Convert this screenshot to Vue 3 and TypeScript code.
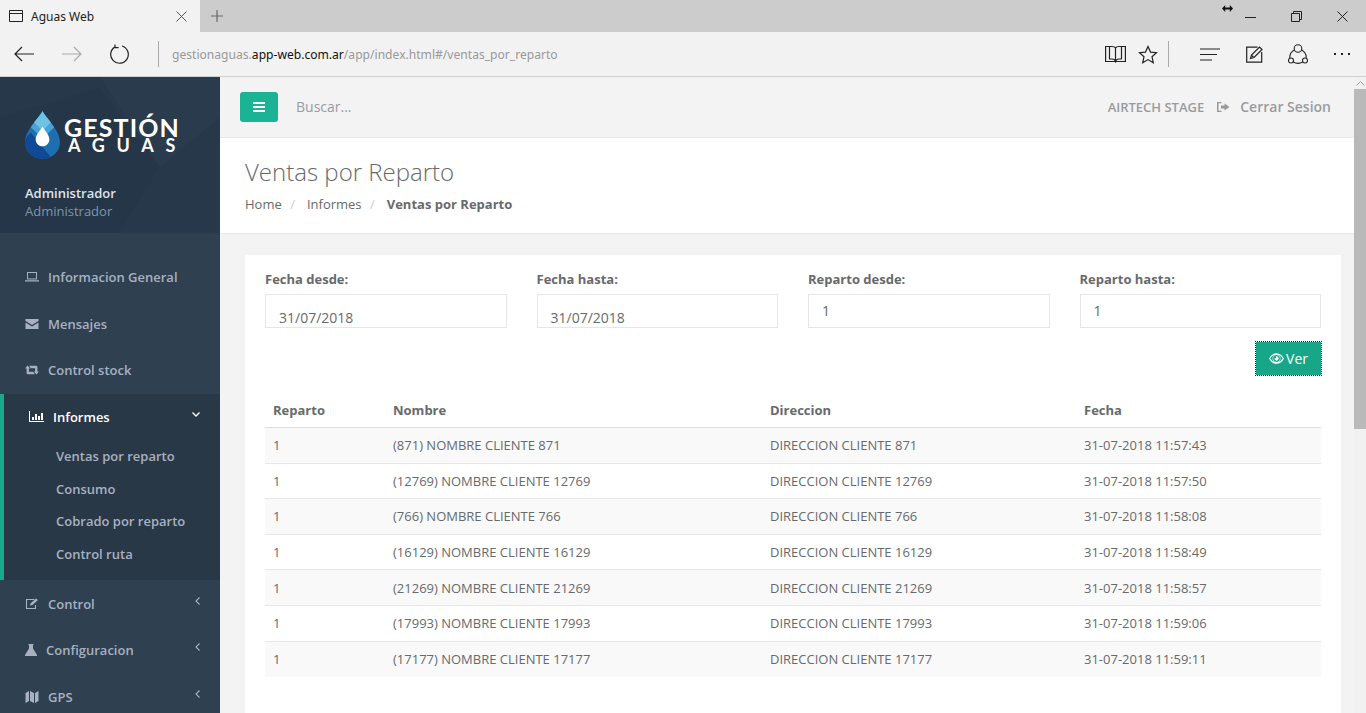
<script setup lang="ts">
interface Venta {
  id: number;
  hora: string;
}

const ventas: Venta[] = [
  { id: 871, hora: "11:57:43" },
  { id: 12769, hora: "11:57:50" },
  { id: 766, hora: "11:58:08" },
  { id: 16129, hora: "11:58:49" },
  { id: 21269, hora: "11:58:57" },
  { id: 17993, hora: "11:59:06" },
  { id: 17177, hora: "11:59:11" },
];

const subItems = ["Ventas por reparto", "Consumo", "Cobrado por reparto", "Control ruta"];
</script>

<template>
  <div class="window">
    <div class="tabstrip">
      <div class="tab">
        <svg class="tab-icon" width="14" height="12" viewBox="0 0 14 12" fill="none" stroke="#222">
          <path d="M.5.5h13v11H.5zM.5 3.5h13" />
        </svg>
        <span class="tab-title">Aguas Web</span>
        <svg width="11" height="11" viewBox="0 0 11 11" stroke="#555" fill="none"><path d="M.5.5l10 10M10.5.5l-10 10" /></svg>
      </div>
      <svg class="plus" width="12" height="12" viewBox="0 0 12 12" stroke="#666" stroke-width="1.2"><path d="M6 0v12M0 6h12" /></svg>
      <div class="win-controls">
        <svg width="11" height="11" viewBox="0 0 11 11" stroke="#222" fill="none"><path d="M0 6.5h11" /></svg>
        <svg width="11" height="11" viewBox="0 0 11 11" stroke="#222" fill="none"><path d="M.5 2.5h8v8h-8zM2.5 2.5v-2h8v8h-2" /></svg>
        <svg width="11" height="11" viewBox="0 0 11 11" stroke="#222" fill="none"><path d="M.5.5l10 10M10.5.5l-10 10" /></svg>
      </div>
      <svg class="cursor" width="11" height="7" viewBox="0 0 11 7" fill="#111"><path d="M0 3.500L3.200 0v2.500h4.600V0L11 3.500 7.800 7V4.500H3.200V7z" /></svg>
    </div>

    <div class="addressbar">
      <div class="nav-buttons">
        <svg width="20" height="16" viewBox="0 0 20 16" fill="none" stroke="#222" stroke-width="1.2"><path d="M20 8H1M8 1L1 8l7 7" /></svg>
        <svg width="20" height="16" viewBox="0 0 20 16" fill="none" stroke="#aaa" stroke-width="1.2"><path d="M0 8h19M12 1l7 7-7 7" /></svg>
        <svg width="20" height="20" viewBox="0 0 20 20" fill="none" stroke="#222" stroke-width="1.2"><path d="M5.5 2.6a8.8 8.8 0 1 0 6.5-.6M5 .5v3.2h3.6" /></svg>
      </div>
      <div class="divider"></div>
      <div class="url">gestionaguas.<b>app-web.com.ar</b>/app/index.html#/ventas_por_reparto</div>
      <div class="tools">
        <svg class="t-book" width="21" height="18" viewBox="0 0 21 18" fill="none" stroke="#222" stroke-width="1.2"><path d="M.6 1.500h6.400c1.800 0 3 .6 3.500 1.500.5-.9 1.700-1.500 3.500-1.500h6.400v15H.6zM4.500 1.500v12.500h2.500c1.800 0 3 .7 3.500 2.500.5-1.800 1.700-2.500 3.500-2.500h2.500V1.500M10.500 3v13.500" /></svg>
        <svg class="t-star" width="20" height="19" viewBox="0 0 20 19" fill="none" stroke="#222" stroke-width="1.200"><path d="M10 1.500l2.500 5.600 6 .6-4.500 4 1.300 6L10 14.600l-5.300 3.100 1.300-6-4.500-4 6-.6z" /></svg>
        <div class="divider tool-div"></div>
        <svg class="t-hub" width="20" height="13" viewBox="0 0 20 13" stroke="#222" stroke-width="1.100"><path d="M0 1h20M0 6.500h17M0 12h12" /></svg>
        <svg class="t-note" width="17" height="17" viewBox="0 0 17 17" fill="none" stroke="#222" stroke-width="1.200"><path d="M11.500 1.200H.7v15h15V6" /><path d="M4.500 12.500l1-3.500L13.500 1l2.500 2.500-8 8z" /><path d="M5.500 11.500l1-2.500 1.500 1.500z" fill="#222" stroke="none" /></svg>
        <svg class="t-share" width="20" height="21" viewBox="0 0 20 21" fill="none" stroke="#222" stroke-width="1.100"><circle cx="10" cy="4.500" r="3.800" /><circle cx="3" cy="16.500" r="2.500" /><circle cx="17" cy="16.500" r="2.500" /><path d="M6.400 6C3.400 7.500 1.600 10.500 1.800 14M13.600 6c3 1.500 4.800 4.500 4.600 8M5.200 18c2.800 1.600 6.800 1.600 9.600 0" /></svg>
        <div class="dots"><i></i><i></i><i></i></div>
      </div>
    </div>

    <div class="page">
      <aside class="sidebar">
        <div class="profile">
          <svg class="polys" width="220" height="156" viewBox="0 0 220 156">
            <path d="M100 0l60 90 60-50V0z" fill="#fff" opacity=".015" />
            <path d="M0 40l100-30 60 80-40 66H0z" fill="#000" opacity=".02" />
          </svg>
          <div class="logo">
            <svg class="drop" width="35" height="48" viewBox="0 0 36 49">
              <path d="M18 0C14 7 0 20 0 32c0 9.500 8 17 18 17s18-7.500 18-17C36 20 22 7 18 0z" fill="#1f6fb0" />
              <path d="M18 0c-2.500 4.500-8 10.500-12 16.500L18 28l12-11.500C26 10.500 20.500 4.500 18 0z" fill="#4aa3d4" />
              <path d="M18 0c-2 3.500-5.500 7.500-8.500 11.500L18 20l8.500-8.500C23.500 7.500 20 3.500 18 0z" fill="#6fc3e2" />
              <path d="M0 32c0 9.500 8 17 18 17 3 0 6-.7 8.500-2L6 22c-3 3-6 6-6 10z" fill="#0f4a97" />
              <path d="M18 16c-2 3.500-7 8-7 13 0 4 3 7 7 7s7-3 7-7c0-5-5-9.500-7-13z" fill="#fff" />
            </svg>
            <div class="logo-text">
              <div class="logo-top">GESTIÓN</div>
              <div class="logo-bottom">AGUAS</div>
            </div>
          </div>
          <div class="user-name">Administrador</div>
          <div class="user-role">Administrador</div>
        </div>

        <nav class="menu">
          <a class="item">
            <svg width="14" height="10" viewBox="0 0 14 10" fill="#a7b1c2"><path d="M2 0h10v7.500H2zM3 1v5.500h8V1zM0 8.200h14V9.500H0z" fill-rule="evenodd" /></svg>
            <span>Informacion General</span>
          </a>
          <a class="item">
            <svg width="14" height="10" viewBox="0 0 13 10" fill="#a7b1c2"><path d="M0 0h13v2L6.500 6 0 2zM0 3.500l6.500 4 6.500-4V10H0z" /></svg>
            <span>Mensajes</span>
          </a>
          <a class="item">
            <svg width="14" height="10" viewBox="0 0 14 10" fill="#a7b1c2"><path d="M0 3.400L2.600.5l2.600 2.900H3.900v3.400h4.300l1.600 2.400H2.900a1.300 1.300 0 0 1-1.300-1.300V3.400zM14 6.600l-2.600 2.900-2.600-2.900h1.300V3.200H5.800L4.200.8h6.900a1.300 1.300 0 0 1 1.300 1.300v4.500z" /></svg>
            <span>Control stock</span>
          </a>

          <div class="active-group">
            <a class="item active-item">
              <svg width="15" height="11" viewBox="0 0 15 11" fill="#fff"><path d="M0 0h1v10h14v1H0zM3 6h2v3H3zM6 3h2v6H6zM9 5h2v4H9zM12 2h2v7h-2z" /></svg>
              <span class="active-label">Informes</span>
              <svg class="chev" width="8" height="5" viewBox="0 0 8 5" fill="none" stroke="#fff" stroke-width="1.300"><path d="M.5.500L4 4 7.500.500" /></svg>
            </a>
            <a v-for="sub in subItems" :key="sub" class="sub-item">{{ sub }}</a>
          </div>

          <a class="item">
            <svg width="14" height="11" viewBox="0 0 13 11" fill="none" stroke="#a7b1c2" stroke-width="1.100"><path d="M9 1.500H1v9h9V7" /><path d="M4.500 7.500l.5-2L10.500.500 12.500 2l-5.500 5z" fill="#a7b1c2" stroke="none" /></svg>
            <span>Control</span>
            <svg class="chev-left" width="5" height="8" viewBox="0 0 5 8" fill="none" stroke="#a7b1c2" stroke-width="1.100"><path d="M4.500.500L1 4l3.500 3.500" /></svg>
          </a>
          <a class="item">
            <svg width="12" height="12" viewBox="0 0 12 12" fill="#a7b1c2"><path d="M3.500 0h5v1H8v3.500L12 11v1H0v-1l4-6.500V1h-.5z" /></svg>
            <span>Configuracion</span>
            <svg class="chev-left" width="5" height="8" viewBox="0 0 5 8" fill="none" stroke="#a7b1c2" stroke-width="1.100"><path d="M4.500.500L1 4l3.500 3.500" /></svg>
          </a>
          <a class="item">
            <svg width="14" height="12" viewBox="0 0 13 12" fill="#a7b1c2"><path d="M0 2l3.500-2v10L0 12zM4.500 0l4 2v10l-4-2zM9.500 2L13 0v10l-3.500 2z" /></svg>
            <span>GPS</span>
            <svg class="chev-left" width="5" height="8" viewBox="0 0 5 8" fill="none" stroke="#a7b1c2" stroke-width="1.100"><path d="M4.500.500L1 4l3.500 3.500" /></svg>
          </a>
        </nav>
      </aside>

      <main class="content">
        <header class="topbar">
          <button class="menu-btn" type="button">
            <svg width="12" height="10" viewBox="0 0 12 10" fill="#fff"><path d="M0 0h12v2H0zM0 4h12v2H0zM0 8h12v2H0z" /></svg>
          </button>
          <span class="search">Buscar...</span>
          <span class="account">AIRTECH STAGE</span>
          <svg class="logout-icon" width="13" height="10" viewBox="0 0 13 10" fill="#999"><path d="M4.500 0v1.200H1.500v7.600h3V10H0V0zM7.500 1.500L12.500 5l-5 3.500V6.500H4v-3h3.500z" /></svg>
          <span class="logout">Cerrar Sesion</span>
        </header>

        <section class="heading">
          <h2>Ventas por Reparto</h2>
          <ol class="crumbs">
            <li>Home</li>
            <li class="sep">/</li>
            <li>Informes</li>
            <li class="sep">/</li>
            <li class="current">Ventas por Reparto</li>
          </ol>
        </section>

        <section class="wrapper">
          <div class="card">
            <div class="filters">
              <label>
                Fecha desde:
                <input class="date" type="text" value="31/07/2018" />
              </label>
              <label>
                Fecha hasta:
                <input class="date" type="text" value="31/07/2018" />
              </label>
              <label>
                Reparto desde:
                <input type="text" value="1" />
              </label>
              <label>
                Reparto hasta:
                <input type="text" value="1" />
              </label>
            </div>
            <div class="actions">
              <button class="ver" type="button">
                <svg width="15" height="11" viewBox="0 0 14 10" fill="#fff"><path fill-rule="evenodd" d="M7 0c3 0 5.500 2 7 5-1.500 3-4 5-7 5S1.500 8 0 5c1.500-3 4-5 7-5zM7 1.800a3.200 3.200 0 1 0 0 6.400 3.200 3.200 0 0 0 0-6.400zM1.300 5C2.200 6.500 3.300 7.600 4.600 8.200A4.500 4.500 0 0 1 4.600 1.800C3.300 2.400 2.200 3.500 1.300 5zM9.400 1.800a4.500 4.500 0 0 1 0 6.400c1.300-.6 2.400-1.700 3.300-3.200-.9-1.500-2-2.600-3.300-3.200z" /><path d="M7 3a2 2 0 1 1-2 2c.8.300 1.800-.8 1.500-1.900L7 3z" /></svg>
                Ver
              </button>
            </div>
            <table class="grid">
              <colgroup>
                <col style="width: 120px" />
                <col style="width: 377px" />
                <col style="width: 314px" />
                <col />
              </colgroup>
              <thead>
                <tr>
                  <th>Reparto</th>
                  <th>Nombre</th>
                  <th>Direccion</th>
                  <th>Fecha</th>
                </tr>
              </thead>
              <tbody>
                <tr v-for="v in ventas" :key="v.id">
                  <td>1</td>
                  <td>({{ v.id }}) NOMBRE CLIENTE {{ v.id }}</td>
                  <td>DIRECCION CLIENTE {{ v.id }}</td>
                  <td>31-07-2018 {{ v.hora }}</td>
                </tr>
              </tbody>
            </table>
          </div>
        </section>
      </main>

      <div class="scrollbar">
        <div class="sb-arrow">
          <svg width="9" height="5" viewBox="0 0 9 5" fill="none" stroke="#a0a0a0"><path d="M.5 4.500l4-4 4 4" /></svg>
        </div>
        <div class="sb-thumb"></div>
      </div>
    </div>
  </div>
</template>

<style>
html,
body {
  margin: 0;
  overflow: hidden;
}
</style>

<style scoped>
.window {
  width: 1366px;
  height: 713px;
  overflow: hidden;
  display: flex;
  flex-direction: column;
  font-family: "Open Sans", "Noto Sans", sans-serif;
  font-size: 13px;
  color: #676a6c;
  background: #f3f3f4;
}

.tabstrip {
  position: relative;
  height: 32px;
  flex: none;
  display: flex;
  align-items: center;
  background: #cccccc;
}

.tab {
  width: 200px;
  height: 32px;
  box-sizing: border-box;
  padding: 0 13px 0 9px;
  display: flex;
  align-items: center;
  background: #f2f2f2;
}

.tab-title {
  flex: 1;
  margin-left: 8px;
  font-family: "Noto Sans", sans-serif;
  font-size: 12px;
  color: #222;
}

.plus {
  margin-left: 11px;
}

.win-controls {
  margin-left: auto;
  display: flex;
  gap: 35px;
  padding-right: 18px;
}

.cursor {
  position: absolute;
  left: 1222px;
  top: 5px;
}

.addressbar {
  height: 44px;
  flex: none;
  display: flex;
  align-items: center;
  background: #f2f2f2;
  border-bottom: 1px solid #cfcfcf;
}

.nav-buttons {
  display: flex;
  align-items: center;
  gap: 28px;
  margin-left: 14px;
}

.divider {
  width: 1px;
  height: 26px;
  background: #aaa;
  margin-left: 28px;
}

.url {
  margin-left: 13px;
  font-family: "Noto Sans", sans-serif;
  font-size: 12.1px;
  color: #999;
}

.url b {
  font-weight: 400;
  color: #111;
}

.tools {
  margin-left: auto;
  display: flex;
  align-items: center;
  padding-right: 16px;
}

.t-star {
  margin-left: 12px;
}

.tool-div {
  margin-left: 10px;
}

.t-hub {
  margin-left: 31px;
}

.t-note {
  margin-left: 26px;
}

.t-share {
  margin-left: 25px;
}

.dots {
  display: flex;
  gap: 5px;
  margin-left: 26px;
}

.dots i {
  width: 2px;
  height: 2px;
  background: #222;
}

.page {
  flex: 1;
  min-height: 0;
  display: flex;
}

.sidebar {
  width: 220px;
  flex: none;
  background: #2f4050;
  color: #a7b1c2;
  font-weight: 600;
}

.profile {
  position: relative;
  height: 156px;
  box-sizing: border-box;
  padding: 33px 25px 0;
  background: #26384a;
  overflow: hidden;
}

.polys {
  position: absolute;
  left: 0;
  top: 0;
}

.logo {
  position: relative;
  display: flex;
  align-items: center;
  gap: 4px;
  height: 49px;
  margin-bottom: 25px;
}

.drop {
  flex: none;
}

.logo-text {
  color: #fff;
  font-family: Lato, sans-serif;
  font-weight: 700;
}

.logo-top {
  font-size: 25px;
  letter-spacing: 1.100px;
  height: 21px;
  line-height: 25px;
}

.logo-bottom {
  font-size: 18px;
  letter-spacing: 11.700px;
  height: 18px;
  line-height: 18px;
  margin-left: 4px;
  white-space: nowrap;
}

.user-name {
  position: relative;
  color: #dfe4ed;
  line-height: 18px;
}

.user-role {
  position: relative;
  color: #8095a8;
  font-weight: 400;
  line-height: 18px;
  margin-top: 0;
}

.menu {
  padding-top: 21px;
}

.item {
  height: 46.5px;
  box-sizing: border-box;
  display: flex;
  align-items: center;
  gap: 9px;
  padding: 0 19px 0 25px;
}

.active-group {
  height: 186.5px;
  margin-bottom: 0.5px;
  box-sizing: border-box;
  background: #293846;
  border-left: 4px solid #19aa8d;
}

.active-item {
  padding-left: 25px;
  color: #fff;
  gap: 9px;
}

.active-label {
  flex: 1;
}

.chev {
  margin-bottom: 5px;
  margin-right: 1px;
}

.chev-left {
  margin-left: auto;
  margin-bottom: 6px;
  margin-right: 1px;
}

.sub-item {
  display: block;
  height: 32.700px;
  line-height: 32.700px;
  padding-left: 52px;
}

.active-group .sub-item:first-of-type {
  margin-top: -3px;
}

.content {
  flex: 1;
  min-width: 0;
  display: flex;
  flex-direction: column;
}

.topbar {
  height: 61px;
  box-sizing: border-box;
  flex: none;
  display: flex;
  align-items: center;
  padding: 0 23px 1px 20px;
  background: #f3f3f4;
  border-bottom: 1px solid #e7eaec;
  color: #999c9e;
}

.menu-btn {
  width: 38px;
  height: 30px;
  padding: 0;
  border: 0;
  border-radius: 3px;
  background: #1ab394;
  display: flex;
  align-items: center;
  justify-content: center;
}

.search {
  margin-left: 18px;
  font-size: 14px;
  flex: 1;
}

.account {
  font-size: 13px;
  font-weight: 600;
}

.logout-icon {
  margin-left: 13px;
}

.logout {
  margin-left: 10px;
  font-size: 14px;
  font-weight: 600;
}

.heading {
  height: 96px;
  box-sizing: border-box;
  flex: none;
  padding: 0 25px;
  background: #fff;
  border-bottom: 1px solid #e7eaec;
}

.heading h2 {
  margin: 0;
  padding-top: 18px;
  font-size: 24px;
  line-height: 32px;
  font-weight: 300;
  color: #676a6c;
}

.crumbs {
  list-style: none;
  margin: 7px 0 0;
  padding: 0;
  display: flex;
  line-height: 18px;
}

.sep {
  color: #ccc;
  margin: 0 12px 0 8.400px;
}

.current {
  font-weight: 700;
}

.wrapper {
  flex: 1;
  padding: 21px 13px 0 25px;
}

.card {
  height: 100%;
  box-sizing: border-box;
  padding: 15px 20px 0;
  background: #fff;
}

.filters {
  display: grid;
  grid-template-columns: repeat(4, 1fr);
  gap: 30px;
}

.filters label {
  display: block;
  font-weight: 700;
  line-height: 18px;
}

.filters input {
  display: block;
  width: 100%;
  height: 34px;
  box-sizing: border-box;
  margin-top: 6px;
  padding: 5px 13px 7px;
  border: 1px solid #e5e6e7;
  outline: 0;
  background: #fff;
  font: 400 14px "Open Sans", sans-serif;
  color: #676a6c;
}

.filters input.date {
  padding: 13px 13px 0;
  font-size: 14px;
}

.actions {
  display: flex;
  justify-content: flex-end;
  margin-top: 13px;
}

.ver {
  height: 35px;
  width: 67px;
  margin-right: -1px;
  padding: 0;
  border: 1px dotted #222;
  background: #18a689;
  background-clip: padding-box;
  color: #fff;
  font: 400 14px "Open Sans", sans-serif;
  display: flex;
  align-items: center;
  justify-content: center;
  gap: 2px;
}

.grid {
  width: 100%;
  margin-top: 16px;
  table-layout: fixed;
  border-collapse: collapse;
}

.grid th {
  height: 35px;
  padding: 0 8px;
  text-align: left;
  font-weight: 700;
  border-bottom: 1px solid #dddddd;
}

.grid td {
  height: 35.600px;
  box-sizing: border-box;
  padding: 0 8px;
  border-top: 1px solid #e7e7e7;
}

.grid tbody tr:nth-child(odd) td {
  background: #f9f9f9;
}

.grid tbody tr:first-child td {
  border-top: 0;
}

.scrollbar {
  width: 12px;
  flex: none;
  background: #f1f1f1;
  display: flex;
  flex-direction: column;
}

.sb-arrow {
  height: 12px;
  display: flex;
  align-items: center;
  justify-content: center;
}

.sb-thumb {
  height: 340px;
  background: #b9b9b9;
}
</style>
